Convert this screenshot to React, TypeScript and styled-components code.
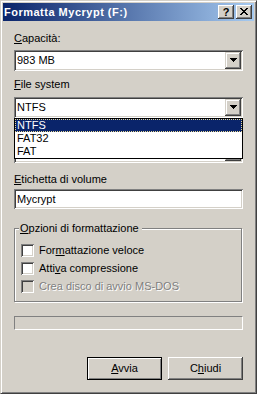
import * as React from 'react';
import styled, { createGlobalStyle } from 'styled-components';

const FACE = '#D4D0C8';

const GlobalStyle = createGlobalStyle`
  html, body {
    margin: 0;
    padding: 0;
    background: ${FACE};
  }
  body {
    font-family: 'Liberation Sans', Tahoma, Arial, sans-serif;
    font-size: 11px;
    color: #000;
  }
`;

const Window = styled.div`
  width: 257px;
  height: 394px;
  box-sizing: border-box;
  border: 1px solid;
  border-color: ${FACE} #404040 #404040 ${FACE};
  box-shadow: inset 1px 1px #fff, inset -1px -1px #808080;
  padding: 2px;
  background: ${FACE};
  display: flex;
  flex-direction: column;
`;

const TitleBar = styled.div`
  height: 18px;
  display: flex;
  align-items: center;
  padding: 0 2px 0 1px;
  background: linear-gradient(to right, #0a246a, #a6caf0);
`;

const TitleText = styled.div`
  flex: 1;
  color: #fff;
  font-weight: bold;
  font-size: 11px;
  line-height: 18px;
  letter-spacing: 0.5px;
  white-space: nowrap;
`;

const CaptionButton = styled.div<{ $gap?: number }>`
  width: 16px;
  height: 14px;
  margin-left: ${(p) => p.$gap ?? 0}px;
  box-sizing: border-box;
  background: ${FACE};
  box-shadow: inset -1px -1px #404040, inset 1px 1px #fff, inset -2px -2px #808080;
  display: flex;
  align-items: center;
  justify-content: center;
  font-weight: bold;
  font-size: 11px;
  line-height: 14px;
  padding-bottom: 1px;
`;

const Body = styled.div`
  flex: 1;
  display: flex;
  flex-direction: column;
  padding: 11px 11px 0;
`;

// $covered: the part lies under the open drop-down list, so its text is not seen
const Label = styled.div<{ $top?: number; $covered?: boolean }>`
  height: 13px;
  line-height: 13px;
  margin-top: ${(p) => p.$top ?? 0}px;
  white-space: nowrap;
  visibility: ${(p) => (p.$covered ? 'hidden' : 'visible')};
`;

const sunken = `
  box-shadow: inset 1px 1px #808080, inset -1px -1px #fff,
    inset 2px 2px #404040, inset -2px -2px ${FACE};
`;

const Combo = styled.div<{ $top?: number }>`
  position: relative;
  height: 21px;
  margin-top: ${(p) => p.$top ?? 0}px;
  box-sizing: border-box;
  padding: 2px;
  background: #fff;
  display: flex;
  ${sunken}
`;

const ComboValue = styled.div<{ $covered?: boolean }>`
  flex: 1;
  line-height: 17px;
  padding-left: 1px;
  white-space: nowrap;
  overflow: hidden;
  visibility: ${(p) => (p.$covered ? 'hidden' : 'visible')};
`;

const DropButton = styled.div`
  width: 16px;
  height: 17px;
  box-sizing: border-box;
  background: ${FACE};
  box-shadow: inset -1px -1px #404040, inset 1px 1px ${FACE},
    inset -2px -2px #808080, inset 2px 2px #fff;
  display: flex;
  align-items: center;
  justify-content: center;
  padding-bottom: 1px;
`;

const DropList = styled.div`
  position: absolute;
  top: 100%;
  left: 0;
  right: 0;
  z-index: 2;
  border: 1px solid #000;
  background: #fff;
`;

const ListItem = styled.div<{ $selected?: boolean }>`
  height: 13px;
  line-height: 13px;
  padding-left: 2px;
  box-sizing: border-box;
  background: ${(p) => (p.$selected ? '#0a246a' : '#fff')};
  color: ${(p) => (p.$selected ? '#fff' : '#000')};
  outline: ${(p) => (p.$selected ? '1px dotted #e8d894' : 'none')};
  outline-offset: -1px;
`;

const TextField = styled.div`
  height: 20px;
  margin-top: 3px;
  box-sizing: border-box;
  padding: 2px 3px;
  line-height: 16px;
  background: #fff;
  ${sunken}
`;

const Group = styled.fieldset`
  margin: 13px 1px 0 0;
  padding: 9px 6px 8px;
  border: 1px solid #808080;
  box-shadow: 1px 1px 0 #fff, inset 1px 1px 0 #fff;
  min-width: 0;
`;

const Legend = styled.legend`
  margin-left: -2px;
  padding: 0 3px 0 1px;
  height: 13px;
  line-height: 13px;
  background: ${FACE};
`;

const CheckRow = styled.div<{ $top?: number }>`
  display: flex;
  align-items: center;
  gap: 5px;
  height: 13px;
  line-height: 13px;
  margin-top: ${(p) => p.$top ?? 0}px;
  white-space: nowrap;
`;

const CheckBox = styled.div<{ $disabled?: boolean }>`
  width: 13px;
  height: 13px;
  flex: none;
  background: ${(p) => (p.$disabled ? FACE : '#fff')};
  ${sunken}
`;

const CheckLabel = styled.span<{ $disabled?: boolean }>`
  color: ${(p) => (p.$disabled ? '#808080' : '#000')};
  text-shadow: ${(p) => (p.$disabled ? '1px 1px 0 #fff' : 'none')};
`;

const Progress = styled.div`
  margin-top: 14px;
  height: 14px;
  box-sizing: border-box;
  border: 1px solid;
  border-color: #808080 #fff #fff #808080;
`;

const ButtonRow = styled.div`
  margin-top: 27px;
  display: flex;
  justify-content: flex-end;
  gap: 6px;
`;

const Button = styled.div<{ $default?: boolean }>`
  width: 75px;
  height: 23px;
  box-sizing: border-box;
  background: ${FACE};
  border: ${(p) => (p.$default ? '1px solid #000' : 'none')};
  box-shadow: ${(p) =>
    p.$default
      ? 'inset 1px 1px #fff, inset -1px -1px #808080'
      : 'inset -1px -1px #404040, inset 1px 1px #fff, inset -2px -2px #808080'};
  display: flex;
  align-items: center;
  justify-content: center;
  line-height: 13px;
`;

const Arrow = () => (
  <svg width="7" height="4" viewBox="0 0 7 4" shapeRendering="crispEdges">
    <rect x="0" y="0" width="7" height="1" fill="#000" />
    <rect x="1" y="1" width="5" height="1" fill="#000" />
    <rect x="2" y="2" width="3" height="1" fill="#000" />
    <rect x="3" y="3" width="1" height="1" fill="#000" />
  </svg>
);

const CloseGlyph = () => (
  <svg width="8" height="7" viewBox="0 0 8 7" shapeRendering="crispEdges">
    {[
      [0, 0], [6, 0], [1, 1], [5, 1], [2, 2], [4, 2],
      [3, 3], [2, 4], [4, 4], [1, 5], [5, 5], [0, 6], [6, 6],
    ].map(([x, y]) => (
      <rect key={`${x}-${y}`} x={x} y={y} width={2} height={1} fill="#000" />
    ))}
  </svg>
);

const fileSystems = ['NTFS', 'FAT32', 'FAT'];

const App: React.FC = () => {
  return (
    <>
      <GlobalStyle />
      <Window>
        <TitleBar>
          <TitleText>Formatta Mycrypt (F:)</TitleText>
          <CaptionButton>?</CaptionButton>
          <CaptionButton $gap={2}>
            <CloseGlyph />
          </CaptionButton>
        </TitleBar>
        <Body>
          <Label>
            <u>C</u>apacità:
          </Label>
          <Combo $top={5}>
            <ComboValue>983 MB</ComboValue>
            <DropButton>
              <Arrow />
            </DropButton>
          </Combo>

          <Label $top={7}>
            <u>F</u>ile system
          </Label>
          <Combo $top={6}>
            <ComboValue>NTFS</ComboValue>
            <DropButton>
              <Arrow />
            </DropButton>
            <DropList>
              {fileSystems.map((fs, i) => (
                <ListItem key={fs} $selected={i === 0}>
                  {fs}
                </ListItem>
              ))}
            </DropList>
          </Combo>

          <Label $top={6} $covered>
            <u>D</u>imensioni unità di allocazione
          </Label>
          <Combo $top={5}>
            <ComboValue $covered>Dimensioni di allocazione predefinite</ComboValue>
            <DropButton>
              <Arrow />
            </DropButton>
          </Combo>

          <Label $top={10}>
            <u>E</u>tichetta di volume
          </Label>
          <TextField>Mycrypt</TextField>

          <Group>
            <Legend>
              <u>O</u>pzioni di formattazione
            </Legend>
            <CheckRow>
              <CheckBox />
              <CheckLabel>
                For<u>m</u>attazione veloce
              </CheckLabel>
            </CheckRow>
            <CheckRow $top={5}>
              <CheckBox />
              <CheckLabel>
                Atti<u>v</u>a compressione
              </CheckLabel>
            </CheckRow>
            <CheckRow $top={5}>
              <CheckBox $disabled />
              <CheckLabel $disabled>Crea disco di avvio MS-DOS</CheckLabel>
            </CheckRow>
          </Group>

          <Progress />

          <ButtonRow>
            <Button $default>
              <span>
                <u>A</u>vvia
              </span>
            </Button>
            <Button>
              <span>
                C<u>h</u>iudi
              </span>
            </Button>
          </ButtonRow>
        </Body>
      </Window>
    </>
  );
};

export default App;
